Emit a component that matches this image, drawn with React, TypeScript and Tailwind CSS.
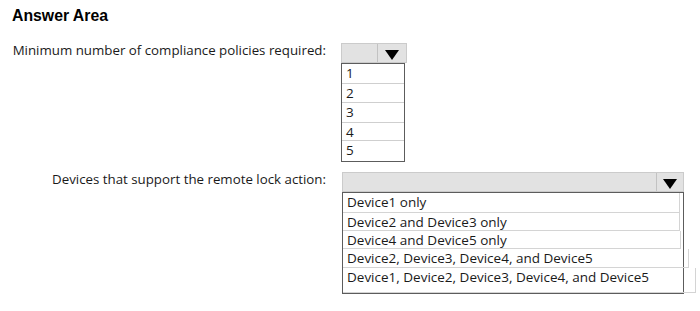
const font = { fontFamily: '"Open Sans", "Noto Sans", sans-serif' };

function Arrow() {
  return (
    <svg width="14" height="10" viewBox="0 0 14 10" className="block">
      <polygon points="0,0 14,0 7,10" fill="#000" />
    </svg>
  );
}

const numbers = [
  { label: "1", h: "h-[19px]" },
  { label: "2", h: "h-[19px]" },
  { label: "3", h: "h-[20px]" },
  { label: "4", h: "h-[18px]" },
  { label: "5", h: "h-[21px]" },
];

const devices = [
  { label: "Device1 only", h: "h-[20px]", w: "w-[337px]" },
  { label: "Device2 and Device3 only", h: "h-[18px]", w: "w-[337px]" },
  { label: "Device4 and Device5 only", h: "h-[18px]", w: "w-[338px]" },
  { label: "Device2, Device3, Device4, and Device5", h: "h-[19px]", w: "w-[346px]" },
  { label: "Device1, Device2, Device3, Device4, and Device5", h: "h-[25px]", w: "w-[353px]" },
];

export default function App() {
  return (
    <div className="h-[311px] w-[700px] bg-white pl-2 pt-[6px] text-[#1a1a1a]" style={font}>
      <h2 className="pl-1 text-[15.8px] font-bold leading-5 text-black [font-family:'Liberation_Sans',Arial,sans-serif]">
        Answer Area
      </h2>

      {/* first question */}
      <div className="mt-[17px] flex items-start">
        <div className="w-[318px] shrink-0 whitespace-nowrap text-right text-[13.3px] leading-[15px]">
          Minimum number of compliance policies required:
        </div>
        <div className="ml-[15px] w-[66px]">
          <div className="flex h-[20px] border border-[#cbcbcb] bg-[#e2e2e2]">
            <div className="w-[36px] border-r border-[#c2c2c2]" />
            <div className="flex flex-1 items-center justify-center pt-[3px]">
              <Arrow />
            </div>
          </div>
          <div className="w-[64px] border border-[#5c5c5c]">
            {numbers.map((n, i) => (
              <div
                key={n.label}
                className={`${n.h} pl-[4px] text-[13.5px] leading-[18px] ${i > 0 ? "border-t border-[#cfcfcf]" : ""}`}
              >
                {n.label}
              </div>
            ))}
          </div>
        </div>
      </div>

      {/* second question */}
      <div className="mt-[10px] flex items-start">
        <div className="w-[318px] shrink-0 whitespace-nowrap text-right text-[13.3px] leading-[15px]">
          Devices that support the remote lock action:
        </div>
        <div className="ml-[16px] w-[342px]">
          <div className="flex h-[20px] border border-[#cbcbcb] bg-[#e2e2e2]">
            <div className="flex-1 border-r border-[#c2c2c2]" />
            <div className="flex w-[26px] items-center justify-center pt-[3px]">
              <Arrow />
            </div>
          </div>
          <div className="w-[342px] border border-[#5c5c5c]">
            {devices.map((d) => (
              <div
                key={d.label}
                className={`${d.h} ${d.w} border-b border-r border-[#d4d4d4] pl-[4px] text-[13.5px] leading-[18px] whitespace-nowrap`}
              >
                {d.label}
              </div>
            ))}
          </div>
        </div>
      </div>
    </div>
  );
}
